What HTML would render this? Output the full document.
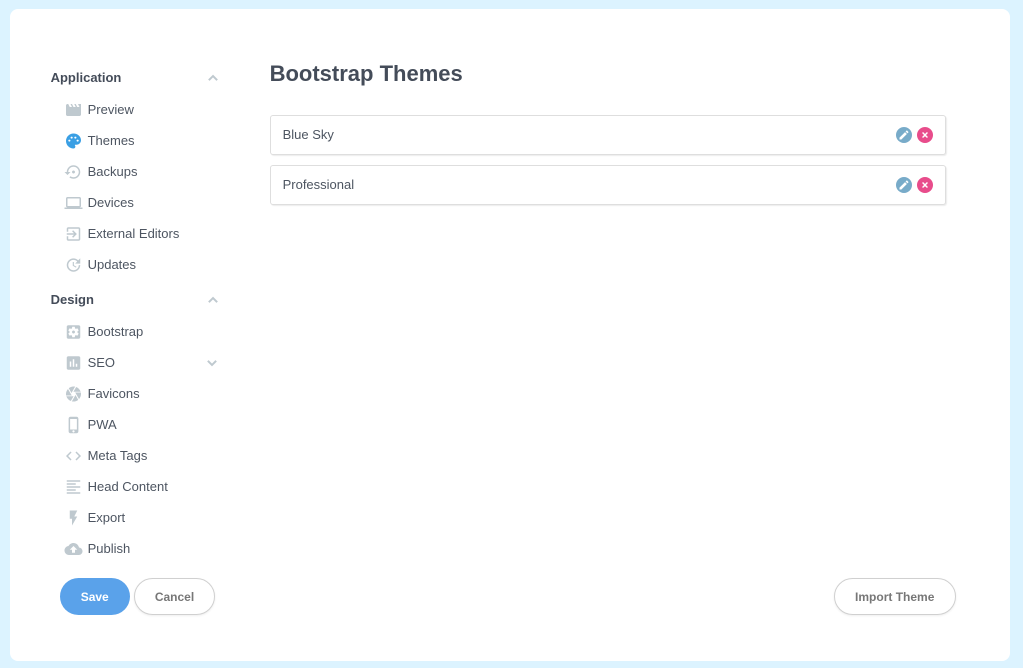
<!DOCTYPE html>
<html><head><meta charset="utf-8"><style>
html,body{margin:0;padding:0;width:1023px;height:668px;overflow:hidden;background:#dcf3ff;font-family:"Liberation Sans",sans-serif}
.card{position:absolute;left:10px;top:9px;width:1000px;height:652px;background:#fff;border-radius:8px}
.t{position:absolute;white-space:nowrap;font-size:13px;line-height:18px;color:#4d5561}
.h{position:absolute;white-space:nowrap;font-size:13px;line-height:18px;font-weight:bold;color:#444c59;left:50.6px}
svg.i{position:absolute;left:64px;width:18px;height:18px;fill:#bfc9cf;transform:translateX(.5px)}
svg.c{position:absolute;width:18px;height:18px;fill:#bfc9cf;stroke:#bfc9cf;stroke-width:.7}
.row{position:absolute;left:270px;width:674px;height:38px;border:1px solid #dedede;border-radius:3px;box-shadow:1px 1px 1px rgba(0,0,0,.08);background:#fff}
.row span{position:absolute;left:11.6px;top:10px;font-size:13px;line-height:18px;color:#4d5561}
.b{position:absolute;top:11px;width:16px;height:16px;border-radius:50%}
.b svg{position:absolute;left:2px;top:2px;width:12px;height:12px;fill:#fff}
.b svg.x{stroke:#fff;stroke-width:2}
.btn{position:absolute;top:578px;height:37px;box-sizing:border-box;border-radius:19px;font-size:12px;font-weight:bold;text-align:center;line-height:39px;text-indent:-.6px}
.o{border:1px solid #d0d0d0;color:#777;line-height:37px;background:#fff;box-shadow:0 1px 2px rgba(0,0,0,.07)}
</style></head><body>
<div class="card"></div>
<div class="h" style="top:69px">Application</div>
<svg class="c" style="left:204px;top:69px" viewBox="0 0 24 24"><path d="M12 8l-6 6 1.41 1.41L12 10.83l4.59 4.58L18 14z"/></svg>

<svg class="i" style="top:101px" viewBox="0 0 24 24"><path d="M18 4l2 4h-3l-2-4h-2l2 4h-3l-2-4H8l2 4H7L5 4H4c-1.1 0-1.99.9-1.99 2L2 18c0 1.1.9 2 2 2h16c1.1 0 2-.9 2-2V4h-4z"/></svg>
<div class="t" style="left:87.6px;top:101px">Preview</div>

<svg class="i" style="top:132px;fill:#3a9fe4" viewBox="0 0 24 24"><path d="M12 2C6.490 2 2 6.490 2 12s4.490 10 10 10c1.380 0 2.500-1.120 2.500-2.500 0-.61-.23-1.200-.64-1.670-.08-.1-.13-.21-.13-.33 0-.28.22-.5.5-.5H16c3.310 0 6-2.690 6-6 0-4.960-4.490-9-10-9z"/><circle cx="6.500" cy="11.500" r="1.400" fill="#fff"/><circle cx="9.500" cy="7.500" r="1.400" fill="#fff"/><circle cx="14.500" cy="7.500" r="1.400" fill="#fff"/><circle cx="17.500" cy="11.500" r="1.400" fill="#fff"/></svg>
<div class="t" style="left:87.6px;top:132px">Themes</div>

<svg class="i" style="top:163px" viewBox="0 0 24 24"><path d="M14 12c0-1.100-.9-2-2-2s-2 .9-2 2 .9 2 2 2 2-.9 2-2zm-2-9c-4.970 0-9 4.030-9 9H0l4 4 4-4H5c0-3.870 3.130-7 7-7s7 3.130 7 7-3.130 7-7 7c-1.510 0-2.910-.49-4.060-1.300l-1.420 1.440C8.040 20.300 9.940 21 12 21c4.970 0 9-4.030 9-9s-4.030-9-9-9z"/></svg>
<div class="t" style="left:87.6px;top:163px">Backups</div>

<svg class="i" style="top:194px" viewBox="0 0 24 24"><path d="M20 18c1.100 0 1.990-.9 1.990-2L22 6c0-1.100-.9-2-2-2H4c-1.100 0-2 .9-2 2v10c0 1.100.9 2 2 2H0v2h24v-2h-4zM4 6h16v10H4V6z"/></svg>
<div class="t" style="left:87.6px;top:194px">Devices</div>

<svg class="i" style="top:225px" viewBox="0 0 24 24"><path d="M10.090 15.590L11.500 17l5-5-5-5-1.410 1.410L12.670 11H3v2h9.670l-2.580 2.590zM19 3H5c-1.110 0-2 .9-2 2v4h2V5h14v14H5v-4H3v4c0 1.100.89 2 2 2h14c1.100 0 2-.9 2-2V5c0-1.100-.9-2-2-2z"/></svg>
<div class="t" style="left:87.6px;top:225px">External Editors</div>

<svg class="i" style="top:256px" viewBox="0 0 24 24"><path d="M21 10.120h-6.780l2.740-2.820c-2.730-2.700-7.150-2.800-9.880-.1-2.730 2.710-2.730 7.080 0 9.790 2.730 2.710 7.150 2.710 9.880 0C18.320 15.650 19 14.080 19 12.100h2c0 1.980-.88 4.550-2.640 6.290-3.510 3.480-9.210 3.480-12.720 0-3.500-3.470-3.530-9.110-.02-12.580 3.510-3.470 9.140-3.470 12.650 0L21 3v7.120zM12.500 8v4.250l3.500 2.080-.72 1.210L11 13V8h1.500z"/></svg>
<div class="t" style="left:87.6px;top:256px">Updates</div>

<div class="h" style="top:291px">Design</div>
<svg class="c" style="left:204px;top:291px" viewBox="0 0 24 24"><path d="M12 8l-6 6 1.410 1.410L12 10.830l4.590 4.580L18 14z"/></svg>

<svg class="i" style="top:323px" viewBox="0 0 24 24"><path d="M12 10c-1.100 0-2 .9-2 2s.9 2 2 2 2-.9 2-2-.9-2-2-2zm7-7H5c-1.110 0-2 .9-2 2v14c0 1.100.89 2 2 2h14c1.110 0 2-.9 2-2V5c0-1.100-.89-2-2-2zm-1.750 9c0 .23-.02.46-.05.68l1.480 1.160c.13.11.17.3.08.45l-1.400 2.420c-.09.15-.27.21-.43.15l-1.740-.7c-.36.28-.76.51-1.180.69l-.26 1.850c-.03.17-.18.3-.35.3h-2.800c-.17 0-.32-.13-.35-.29l-.26-1.850c-.43-.18-.82-.41-1.180-.69l-1.740.7c-.16.06-.34 0-.43-.15l-1.400-2.420c-.09-.15-.05-.34.08-.45l1.480-1.160c-.03-.23-.05-.46-.05-.69 0-.23.02-.46.05-.68l-1.480-1.160c-.13-.11-.17-.3-.08-.45l1.400-2.420c.09-.15.27-.21.43-.15l1.740.7c.36-.28.76-.51 1.180-.69l.26-1.850c.03-.17.18-.3.35-.3h2.800c.17 0 .32.13.35.29l.26 1.850c.43.18.82.41 1.180.69l1.740-.7c.16-.06.34 0 .43.15l1.400 2.420c.09.15.05.34-.08.45l-1.480 1.160c.03.23.05.46.05.69z"/></svg>
<div class="t" style="left:87.6px;top:323px">Bootstrap</div>

<svg class="i" style="top:354px" viewBox="0 0 24 24"><path d="M19 3H5c-1.100 0-2 .9-2 2v14c0 1.100.9 2 2 2h14c1.100 0 2-.9 2-2V5c0-1.100-.9-2-2-2zM9 17H7v-7h2v7zm4 0h-2V7h2v10zm4 0h-2v-4h2v4z"/></svg>
<div class="t" style="left:87.6px;top:354px">SEO</div>
<svg class="c" style="left:203px;top:354px" viewBox="0 0 24 24"><path d="M16.590 8.590L12 13.170 7.410 8.590 6 10l6 6 6-6z"/></svg>

<svg class="i" style="top:385px" viewBox="0 0 24 24"><path d="M9.400 10.500l4.770-8.260C13.470 2.090 12.750 2 12 2c-2.400 0-4.600.85-6.320 2.250l3.660 6.350.06-.1zM21.540 9c-.92-2.920-3.150-5.260-6-6.340L11.880 9h9.660zm.26 1h-7.490l.29.5 4.760 8.250C21 16.970 22 14.610 22 12c0-.69-.07-1.350-.2-2zM8.540 12l-3.900-6.750C3.010 7.030 2 9.390 2 12c0 .69.07 1.350.2 2h7.490l-1.150-2zm-6.080 3c.92 2.920 3.150 5.260 6 6.340L12.120 15H2.460zm11.270 0l-3.900 6.760c.7.15 1.420.24 2.170.24 2.400 0 4.600-.85 6.320-2.250l-3.660-6.350-.93 1.600z"/></svg>
<div class="t" style="left:87.6px;top:385px">Favicons</div>

<svg class="i" style="top:416px" viewBox="0 0 24 24"><path d="M15.500 1h-8C6.120 1 5 2.120 5 3.500v17C5 21.880 6.120 23 7.500 23h8c1.380 0 2.500-1.120 2.500-2.500v-17C18 2.120 16.880 1 15.500 1zm-4 21c-.83 0-1.500-.67-1.500-1.500s.67-1.500 1.500-1.500 1.500.67 1.500 1.500-.67 1.500-1.500 1.500zm4.500-4H7V4h9v14z" transform="translate(.5 0)"/></svg>
<div class="t" style="left:87.6px;top:416px">PWA</div>

<svg class="i" style="top:447px" viewBox="0 0 24 24"><path d="M9.400 16.600L4.800 12l4.600-4.600L8 6l-6 6 6 6 1.400-1.400zm5.200 0l4.600-4.600-4.600-4.600L16 6l6 6-6 6-1.400-1.400z"/></svg>
<div class="t" style="left:87.6px;top:447px">Meta Tags</div>

<svg class="i" style="top:478px" viewBox="0 0 24 24"><path d="M15 15H3v2h12v-2zm0-8H3v2h12V7zM3 13h18v-2H3v2zm0 8h18v-2H3v2zM3 3v2h18V3H3z"/></svg>
<div class="t" style="left:87.6px;top:478px">Head Content</div>

<svg class="i" style="top:509px" viewBox="0 0 24 24"><path d="M7 2v11h3v9l7-12h-4l4-8z"/></svg>
<div class="t" style="left:87.6px;top:509px">Export</div>

<svg class="i" style="top:540px" viewBox="0 0 24 24"><path d="M19.350 10.040C18.670 6.590 15.640 4 12 4 9.110 4 6.600 5.640 5.350 8.040 2.340 8.360 0 10.910 0 14c0 3.310 2.690 6 6 6h13c2.760 0 5-2.240 5-5 0-2.640-2.050-4.780-4.650-4.960zM14 13v4h-4v-4H7l5-5 5 5h-3z"/></svg>
<div class="t" style="left:87.6px;top:540px">Publish</div>

<div style="position:absolute;left:269.6px;top:60px;font-size:22px;line-height:28px;font-weight:bold;color:#444c59;white-space:nowrap">Bootstrap Themes</div>

<div class="row" style="top:115px"><span>Blue Sky</span>
<div class="b" style="left:625px;background:#78abc9"><svg viewBox="0 0 24 24"><path d="M3 17.250V21h3.750L17.810 9.940l-3.750-3.750L3 17.250zM20.710 7.040c.39-.39.39-1.020 0-1.410l-2.340-2.340c-.39-.39-1.020-.39-1.410 0l-1.830 1.830 3.750 3.750 1.830-1.830z"/></svg></div>
<div class="b" style="left:646px;background:#e84c8b"><svg class="x" viewBox="0 0 24 24"><path d="M19 6.410L17.590 5 12 10.590 6.410 5 5 6.410 10.590 12 5 17.590 6.410 19 12 13.410 17.590 19 19 17.590 13.410 12z" transform="translate(3.600 3.600) scale(.7)"/></svg></div>
</div>
<div class="row" style="top:165px"><span>Professional</span>
<div class="b" style="left:625px;background:#78abc9"><svg viewBox="0 0 24 24"><path d="M3 17.250V21h3.750L17.810 9.940l-3.750-3.750L3 17.250zM20.710 7.040c.39-.39.39-1.020 0-1.410l-2.340-2.340c-.39-.39-1.020-.39-1.410 0l-1.830 1.830 3.750 3.750 1.830-1.830z"/></svg></div>
<div class="b" style="left:646px;background:#e84c8b"><svg class="x" viewBox="0 0 24 24"><path d="M19 6.410L17.590 5 12 10.590 6.410 5 5 6.410 10.590 12 5 17.590 6.410 19 12 13.410 17.590 19 19 17.590 13.410 12z" transform="translate(3.600 3.600) scale(.7)"/></svg></div>
</div>

<div class="btn" style="left:60px;width:70px;background:#5aa2ea;color:#fff">Save</div>
<div class="btn o" style="left:134px;width:81px;text-indent:0">Cancel</div>
<div class="btn o" style="left:834px;width:122px">Import Theme</div>
</body></html>
